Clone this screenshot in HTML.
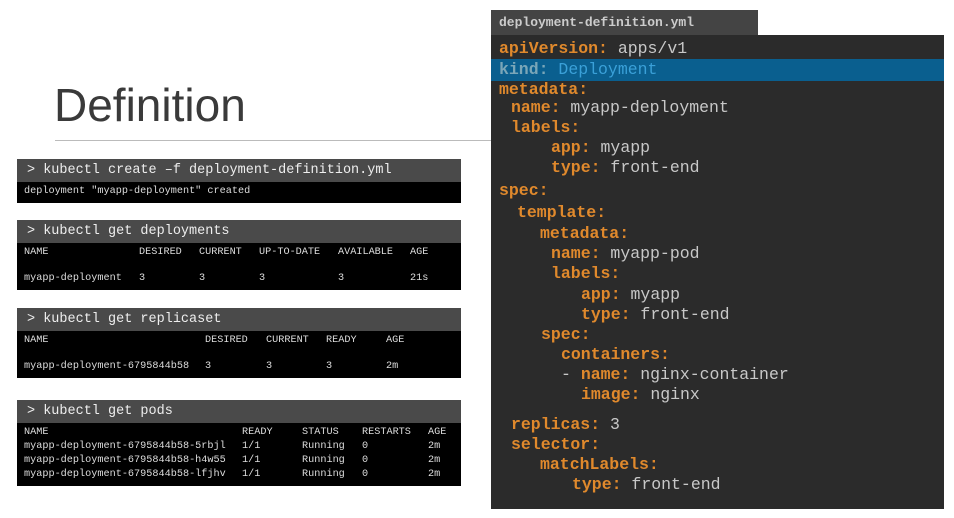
<!DOCTYPE html><html><head><style>
*{margin:0;padding:0;box-sizing:border-box}
body{width:954px;height:518px;background:#fff;position:relative;overflow:hidden;font-family:"Liberation Mono",monospace}
.a{position:absolute;white-space:pre}
.t{font-family:"Liberation Sans",sans-serif;font-size:46px;color:#3a3a3a;left:54px;top:78px;font-weight:300}
.hr{position:absolute;left:55px;top:140px;width:440px;height:1px;background:#bbb}
.h{position:absolute;left:17px;width:444px;background:#4a4a4a;color:#eee;font-size:13.5px;padding-left:10px;line-height:23px}
.b{position:absolute;left:17px;width:444px;background:#000;color:#ddd;font-size:10.2px}
.b span{position:absolute;white-space:pre}
.panel{position:absolute;left:491px;top:35px;width:453px;height:474px;background:#2b2b2b}
.tab{position:absolute;left:491px;top:10px;width:267px;height:25px;background:#444;color:#ccc;font-weight:bold;font-size:13px;line-height:25px;padding-left:8px;font-family:"Liberation Mono",monospace}
.hl{position:absolute;left:491px;top:59px;width:453px;height:22px;background:#0a5f8f}
.c{position:absolute;white-space:pre;font-size:16.5px;color:#c8c8c8;line-height:20px}
.c b{color:#e0892c}
</style></head><body>
<div class="a t">Definition</div><div class="hr"></div>

<div class="h" style="top:159px">&gt; kubectl create –f deployment-definition.yml</div>
<div class="b" style="top:182px;height:21px"><span style="left:7px;top:4px">deployment "myapp-deployment" created</span></div>

<div class="h" style="top:220px">&gt; kubectl get deployments</div>
<div class="b" style="top:243px;height:47px">
<span style="left:7px;top:4px">NAME</span><span style="left:122px;top:4px">DESIRED</span><span style="left:182px;top:4px">CURRENT</span><span style="left:242px;top:4px">UP-TO-DATE</span><span style="left:321px;top:4px">AVAILABLE</span><span style="left:393px;top:4px">AGE</span>
<span style="left:7px;top:30px">myapp-deployment</span><span style="left:122px;top:30px">3</span><span style="left:182px;top:30px">3</span><span style="left:242px;top:30px">3</span><span style="left:321px;top:30px">3</span><span style="left:393px;top:30px">21s</span></div>

<div class="h" style="top:308px">&gt; kubectl get replicaset</div>
<div class="b" style="top:331px;height:47px">
<span style="left:7px;top:4px">NAME</span><span style="left:188px;top:4px">DESIRED</span><span style="left:249px;top:4px">CURRENT</span><span style="left:309px;top:4px">READY</span><span style="left:369px;top:4px">AGE</span>
<span style="left:7px;top:30px">myapp-deployment-6795844b58</span><span style="left:188px;top:30px">3</span><span style="left:249px;top:30px">3</span><span style="left:309px;top:30px">3</span><span style="left:369px;top:30px">2m</span></div>

<div class="h" style="top:400px">&gt; kubectl get pods</div>
<div class="b" style="top:423px;height:63px">
<span style="left:7px;top:4px">NAME</span><span style="left:225px;top:4px">READY</span><span style="left:285px;top:4px">STATUS</span><span style="left:345px;top:4px">RESTARTS</span><span style="left:411px;top:4px">AGE</span>
<span style="left:7px;top:18px">myapp-deployment-6795844b58-5rbjl</span><span style="left:225px;top:18px">1/1</span><span style="left:285px;top:18px">Running</span><span style="left:345px;top:18px">0</span><span style="left:411px;top:18px">2m</span>
<span style="left:7px;top:32px">myapp-deployment-6795844b58-h4w55</span><span style="left:225px;top:32px">1/1</span><span style="left:285px;top:32px">Running</span><span style="left:345px;top:32px">0</span><span style="left:411px;top:32px">2m</span>
<span style="left:7px;top:46px">myapp-deployment-6795844b58-lfjhv</span><span style="left:225px;top:46px">1/1</span><span style="left:285px;top:46px">Running</span><span style="left:345px;top:46px">0</span><span style="left:411px;top:46px">2m</span></div>

<div class="tab">deployment-definition.yml</div>
<div class="panel"></div>
<div class="hl"></div>
<div class="c" style="left:499px;top:39px"><b>apiVersion:</b> apps/v1</div>
<div class="c" style="left:499px;top:60px;color:#3aa0d8"><b style="color:#7aa6b8">kind:</b> Deployment</div>
<div class="c" style="left:499px;top:80px"><b>metadata:</b></div>
<div class="c" style="left:511px;top:98px"><b>name:</b> myapp-deployment</div>
<div class="c" style="left:511px;top:118px"><b>labels:</b></div>
<div class="c" style="left:551px;top:138px"><b>app:</b> myapp</div>
<div class="c" style="left:551px;top:158px"><b>type:</b> front-end</div>
<div class="c" style="left:499px;top:181px"><b>spec:</b></div>
<div class="c" style="left:517px;top:203px"><b>template:</b></div>
<div class="c" style="left:540px;top:224px"><b>metadata:</b></div>
<div class="c" style="left:551px;top:244px"><b>name:</b> myapp-pod</div>
<div class="c" style="left:551px;top:264px"><b>labels:</b></div>
<div class="c" style="left:581px;top:285px"><b>app:</b> myapp</div>
<div class="c" style="left:581px;top:305px"><b>type:</b> front-end</div>
<div class="c" style="left:541px;top:325px"><b>spec:</b></div>
<div class="c" style="left:561px;top:345px"><b>containers:</b></div>
<div class="c" style="left:561px;top:365px">- <b>name:</b> nginx-container</div>
<div class="c" style="left:581px;top:385px"><b>image:</b> nginx</div>
<div class="c" style="left:511px;top:415px"><b>replicas:</b> 3</div>
<div class="c" style="left:511px;top:435px"><b>selector:</b></div>
<div class="c" style="left:540px;top:455px"><b>matchLabels:</b></div>
<div class="c" style="left:572px;top:475px"><b>type:</b> front-end</div>
</body></html>
